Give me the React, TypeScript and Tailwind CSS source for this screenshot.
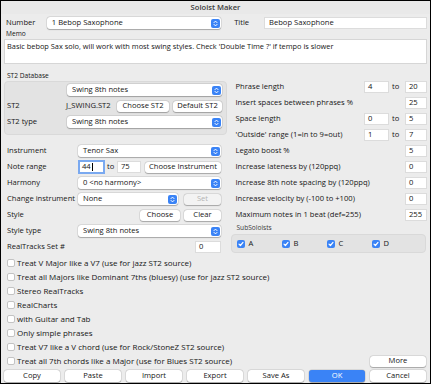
import { ReactNode } from 'react';

function Chevron() {
  return (
    <span className="flex h-[9px] w-[9px] shrink-0 items-center justify-center rounded-[2px] bg-[#3a83f6]">
      <svg width="5" height="7" viewBox="0 0 5 7" fill="none" stroke="white" strokeWidth="1" strokeLinecap="round" strokeLinejoin="round">
        <path d="M1 2.6 L2.5 1.1 L4 2.6" />
        <path d="M1 4.4 L2.5 5.9 L4 4.4" />
      </svg>
    </span>
  );
}

function Select({ value, className = '' }: { value: string; className?: string }) {
  return (
    <div className={`flex h-[12px] items-center justify-between rounded-[3px] bg-white pl-[5px] pr-[1px] shadow-[0_0_0_0.5px_rgba(0,0,0,0.12),0_0.5px_1px_rgba(0,0,0,0.25)] ${className}`}>
      <span>{value}</span>
      <Chevron />
    </div>
  );
}

function Btn({ label, className = '', disabled, primary }: { label: string; className?: string; disabled?: boolean; primary?: boolean }) {
  const look = primary
    ? 'bg-[#3a83f6] text-white'
    : disabled
      ? 'bg-[#f3f3f3] text-[#b4b4b4]'
      : 'bg-white text-[#161616]';
  return (
    <div className={`flex h-[11px] shrink-0 items-center justify-center rounded-[3px] shadow-[0_0_0_0.5px_rgba(0,0,0,0.12),0_0.5px_1px_rgba(0,0,0,0.25)] ${look} ${className}`}>
      {label}
    </div>
  );
}

function Field({ value, className = '', focused }: { value: string; className?: string; focused?: boolean }) {
  return (
    <div
      className={`flex h-[12px] shrink-0 items-center bg-white pl-[3px] ${
        focused ? 'outline outline-[2px] outline-[#7aa9f0] -outline-offset-1' : 'border border-[#dcdcdc]'
      } ${className}`}
    >
      {value}
      {focused && <span className="ml-[1px] h-[8px] w-px bg-black" />}
    </div>
  );
}

function Check({ checked }: { checked?: boolean }) {
  if (checked) {
    return (
      <span className="flex h-[8px] w-[8px] shrink-0 items-center justify-center rounded-[2px] bg-[#3a83f6]">
        <svg width="6" height="6" viewBox="0 0 6 6" fill="none" stroke="white" strokeWidth="1.2" strokeLinecap="round" strokeLinejoin="round">
          <path d="M1 3.1 L2.4 4.5 L5 1.4" />
        </svg>
      </span>
    );
  }
  return <span className="h-[8px] w-[8px] shrink-0 rounded-[2px] border border-[#c3c3c3] bg-white" />;
}

function Row({ children, className = '' }: { children: ReactNode; className?: string }) {
  return <div className={`flex h-[16px] items-center ${className}`}>{children}</div>;
}

export default function App() {
  const options = [
    'Treat V Major like a V7 (use for jazz ST2 source)',
    'Treat all Majors like Dominant 7ths (bluesy) (use for jazz ST2 source)',
    'Stereo RealTracks',
    'RealCharts',
    'with Guitar and Tab',
    'Only simple phrases',
    'Treat V7 like a V chord (use for Rock/StoneZ ST2 source)',
    'Treat all 7th chords like a Major (use for Blues ST2 source)',
  ];

  const rightRows: { label: string; a: string; b?: string }[] = [
    { label: 'Phrase length', a: '4', b: '20' },
    { label: 'Insert spaces between phrases %', a: '25' },
    { label: 'Space length', a: '0', b: '5' },
    { label: "'Outside' range (1=in to 9=out)", a: '1', b: '7' },
    { label: 'Legato boost %', a: '5' },
    { label: 'Increase lateness by (120ppq)', a: '0' },
    { label: 'Increase 8th note spacing by (120ppq)', a: '0' },
    { label: 'Increase velocity by (-100 to +100)', a: '0' },
    { label: 'Maximum notes in 1 beat (def=255)', a: '255' },
  ];

  return (
    <div className="flex h-[384px] w-[431px] flex-col overflow-hidden border border-black bg-[#ececec] font-['Open_Sans','Liberation_Sans',sans-serif] text-[7.6px] leading-none text-[#161616]">
      {/* Title bar */}
      <div className="flex h-[13px] shrink-0 items-center justify-center bg-[#e9e9e9] font-semibold text-[#3c3c3c]">
        Soloist Maker
      </div>

      <div className="flex flex-col px-[3px]">
        {/* Number / Title */}
        <div className="mt-[3px] flex h-[12px] items-center">
          <span className="w-[43px] pl-[2px]">Number</span>
          <Select value="1 Bebop Saxophone" className="w-[175px]" />
          <span className="ml-[13px] w-[30px]">Title</span>
          <Field value="Bebop Saxophone" className="w-[163px] pl-[4px]" />
        </div>

        {/* Memo */}
        <div className="mt-[1px] flex h-[9px] items-center pl-[2px] text-[6.6px]">Memo</div>
        <div className="h-[25px] border border-[#d6d6d6] bg-white px-[2px] pt-[3px] text-[7.4px]">
          Basic bebop Sax solo, will work with most swing styles. Check 'Double Time ?' if tempo is slower
        </div>

        <div className="flex">
          {/* Left column */}
          <div className="flex w-[224px] flex-col">
            <div className="mt-[8px] flex h-[8px] items-center pl-[3px] text-[6.6px]">ST2 Database</div>
            <div className="mt-[1px] h-[54px] w-[223px] rounded-[4px] border border-[#d9d9d9] bg-[#e3e3e3]">
              <Row>
                <span className="w-[62px]" />
                <Select value="Swing 8th notes" className="w-[155px]" />
              </Row>
              <Row>
                <span className="w-[61px] pl-[2px]">ST2</span>
                <span className="w-[51px]">J_SWING.ST2</span>
                <Btn label="Choose ST2" className="w-[52px]" />
                <Btn label="Default ST2" className="ml-[4px] w-[49px]" />
              </Row>
              <Row>
                <span className="w-[62px] pl-[2px]">ST2 type</span>
                <Select value="Swing 8th notes" className="w-[155px]" />
              </Row>
            </div>

            <Row className="mt-[8px]">
              <span className="w-[74px] pl-[3px]">Instrument</span>
              <Select value="Tenor Sax" className="w-[143px]" />
            </Row>
            <Row>
              <span className="w-[75px] pl-[3px]">Note range</span>
              <Field value="44" focused className="w-[25px]" />
              <span className="ml-[3px] w-[10px]">to</span>
              <Field value="75" className="w-[24px]" />
              <Btn label="Choose Instrument" className="ml-[4px] w-[76px]" />
            </Row>
            <Row>
              <span className="w-[74px] pl-[3px]">Harmony</span>
              <Select value="0 <no harmony>" className="w-[143px]" />
            </Row>
            <Row>
              <span className="w-[74px] whitespace-nowrap pl-[3px]">Change instrument</span>
              <Select value="None" className="w-[100px]" />
              <Btn label="Set" disabled className="ml-[6px] w-[37px]" />
            </Row>
            <Row>
              <span className="w-[136px] pl-[3px]">Style</span>
              <Btn label="Choose" className="w-[40px]" />
              <Btn label="Clear" className="ml-[4px] w-[37px]" />
            </Row>
            <Row>
              <span className="w-[74px] pl-[3px]">Style type</span>
              <Select value="Swing 8th notes" className="w-[143px]" />
            </Row>
            <Row>
              <span className="w-[191px] pl-[3px]">RealTracks Set #</span>
              <Field value="0" className="w-[26px]" />
            </Row>
          </div>

          {/* Right column */}
          <div className="ml-[4px] flex w-[196px] flex-col pt-[15px]">
            {rightRows.map((r) => (
              <Row key={r.label}>
                <span className="flex-1 whitespace-nowrap pl-[4px]">{r.label}</span>
                {r.b ? (
                  <>
                    <Field value={r.a} className="w-[25px]" />
                    <span className="w-[16px] pl-[3px]">to</span>
                    <Field value={r.b} className="w-[22px]" />
                  </>
                ) : (
                  <Field value={r.a} className="w-[22px]" />
                )}
              </Row>
            ))}
            <div className="flex h-[10px] items-center pl-[5px] text-[6.6px] text-[#3a3a3a]">SubSoloists</div>
            <div className="mt-[1px] flex h-[19px] w-[195px] items-center rounded-[4px] border border-[#d9d9d9] bg-[#e3e3e3] pl-[5px]">
              {['A', 'B', 'C', 'D'].map((l) => (
                <div key={l} className="flex w-[45px] items-center gap-[3px]">
                  <Check checked />
                  <span>{l}</span>
                </div>
              ))}
            </div>
          </div>
        </div>

        {/* Options */}
        <div className="mt-[1px] flex flex-col text-[8px]">
          {options.map((o, i) => (
            <div key={o} className="flex h-[14px] items-center justify-between pl-[3px]">
              <div className="flex items-center gap-[2px]">
                <Check />
                <span>{o}</span>
              </div>
              {i === options.length - 1 && <Btn label="More" className="mr-[1px] w-[56px] text-[7.6px]" />}
            </div>
          ))}
        </div>

        {/* Bottom buttons */}
        <div className="mt-[2px] flex gap-[5px]">
          {['Copy', 'Paste', 'Import', 'Export', 'Save As', 'OK', 'Cancel'].map((b) => (
            <Btn key={b} label={b} primary={b === 'OK'} className="h-[12px] w-[56px]" />
          ))}
        </div>
      </div>
    </div>
  );
}
